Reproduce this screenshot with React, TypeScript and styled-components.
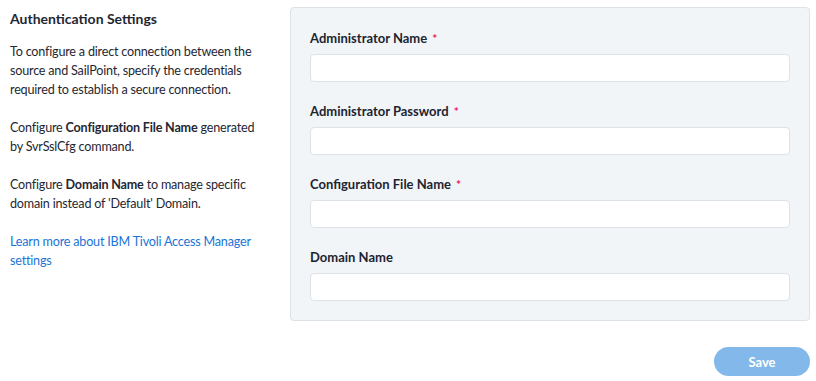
import React from 'react';
import styled, { createGlobalStyle } from 'styled-components';

const GlobalStyle = createGlobalStyle`
    html, body {
        margin: 0;
        padding: 0;
        background: #ffffff;
    }
    body {
        font-family: Lato, "Open Sans", "Liberation Sans", sans-serif;
        color: #1f2733;
    }
`;

const Page = styled.div`
    width: 816px;
    height: 381px;
    box-sizing: border-box;
    padding: 7px 6px 0 10px;
    display: flex;
    flex-direction: column;
`;

const Columns = styled.div`
    display: flex;
    gap: 20px;
`;

const Aside = styled.aside`
    width: 260px;
    flex: none;
    font-size: 12.6px;
    letter-spacing: -0.2px;
    line-height: 19px;
    h2 {
        font-size: 14px;
        font-weight: 700;
        letter-spacing: 0;
        margin: 2px 0 14px;
        line-height: 19px;
    }
    p {
        margin: 0 0 19px;
    }
    b {
        font-weight: 700;
    }
    a {
        color: #1a74d6;
        text-decoration: none;
    }
`;

const Panel = styled.section`
    flex: 1;
    background: #f2f5f8;
    border: 1px solid #dde2e8;
    border-radius: 4px;
    padding: 22px 19px 19px 19px;
    display: flex;
    flex-direction: column;
    gap: 21px;
`;

const Field = styled.div`
    display: flex;
    flex-direction: column;
    gap: 7px;
`;

const Label = styled.label`
    font-size: 13px;
    font-weight: 700;
    line-height: 17px;
    color: #1c2430;
`;

const Required = styled.span`
    color: #e0245e;
    font-size: 12px;
    margin-left: 5px;
`;

const Input = styled.input`
    height: 28px;
    box-sizing: border-box;
    border: 1px solid #dde2e8;
    border-radius: 4px;
    background: #ffffff;
    font-family: inherit;
    font-size: 13px;
    padding: 0 10px;
    outline: none;
`;

const Footer = styled.div`
    display: flex;
    justify-content: flex-end;
    padding-top: 26px;
`;

const SaveButton = styled.button`
    width: 96px;
    height: 29px;
    border: none;
    border-radius: 15px;
    background: #82b9ea;
    color: #ffffff;
    font-family: inherit;
    font-size: 13px;
    font-weight: 700;
    cursor: not-allowed;
`;

const fields = [
    { label: 'Administrator Name', required: true, type: 'text' },
    { label: 'Administrator Password', required: true, type: 'password' },
    { label: 'Configuration File Name', required: true, type: 'text' },
    { label: 'Domain Name', required: false, type: 'text' },
];

const App: React.FunctionComponent = (): JSX.Element => {
    return (
        <>
            <GlobalStyle />
            <Page>
                <Columns>
                    <Aside>
                        <h2>Authentication Settings</h2>
                        <p>
                            To configure a direct connection between the source and SailPoint, specify the
                            credentials required to establish a secure connection.
                        </p>
                        <p>
                            Configure <b>Configuration File Name</b> generated by SvrSslCfg command.
                        </p>
                        <p>
                            Configure <b>Domain Name</b> to manage specific domain instead of 'Default' Domain.
                        </p>
                        <p>
                            <a href="#">Learn more about IBM Tivoli Access Manager settings</a>
                        </p>
                    </Aside>
                    <Panel>
                        {fields.map((f) => (
                            <Field key={f.label}>
                                <Label>
                                    {f.label}
                                    {f.required && <Required>*</Required>}
                                </Label>
                                <Input type={f.type} />
                            </Field>
                        ))}
                    </Panel>
                </Columns>
                <Footer>
                    <SaveButton disabled>Save</SaveButton>
                </Footer>
            </Page>
        </>
    );
};

export default App;
